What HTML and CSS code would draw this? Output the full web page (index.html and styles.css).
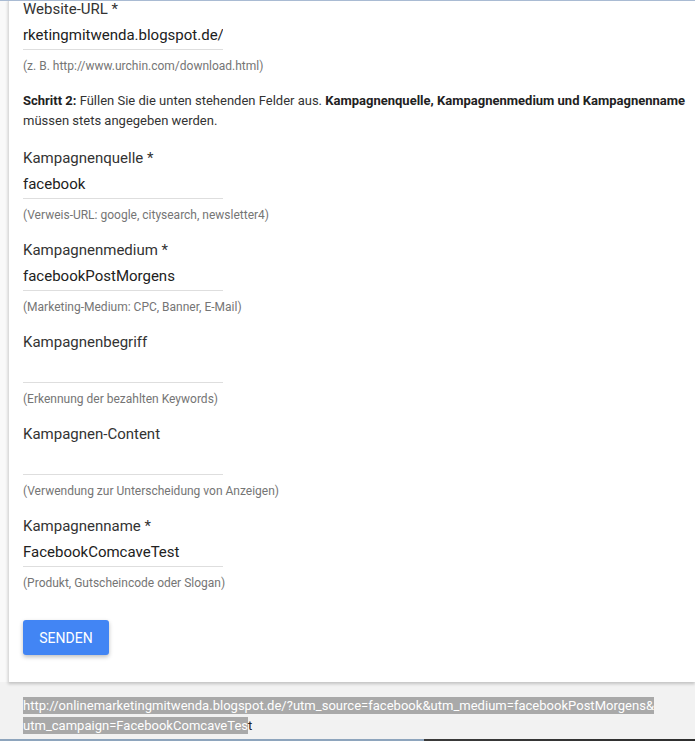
FILE: index.html
```html
<!DOCTYPE html>
<html lang="de">
<head>
  <meta charset="UTF-8">
  <title>Kampagnen-URL-Builder</title>
  <link rel="stylesheet" href="styles.css">
</head>
<body>
  <div class="page">
    <form class="card" onsubmit="return false">
      <div class="field field-first">
        <label>Website-URL *</label>
        <input type="text" value="rketingmitwenda.blogspot.de/">
        <p class="hint">(z. B. http://www.urchin.com/download.html)</p>
      </div>

      <p class="step"><b>Schritt 2:</b> Füllen Sie die unten stehenden Felder aus. <b>Kampagnenquelle, Kampagnenmedium und Kampagnenname</b> müssen stets angegeben werden.</p>

      <div class="field">
        <label>Kampagnenquelle *</label>
        <input type="text" value="facebook">
        <p class="hint">(Verweis-URL: google, citysearch, newsletter4)</p>
      </div>

      <div class="field">
        <label>Kampagnenmedium *</label>
        <input type="text" value="facebookPostMorgens">
        <p class="hint">(Marketing-Medium: CPC, Banner, E-Mail)</p>
      </div>

      <div class="field">
        <label>Kampagnenbegriff</label>
        <input type="text" value="">
        <p class="hint">(Erkennung der bezahlten Keywords)</p>
      </div>

      <div class="field">
        <label>Kampagnen-Content</label>
        <input type="text" value="">
        <p class="hint">(Verwendung zur Unterscheidung von Anzeigen)</p>
      </div>

      <div class="field">
        <label>Kampagnenname *</label>
        <input type="text" value="FacebookComcaveTest">
        <p class="hint">(Produkt, Gutscheincode oder Slogan)</p>
      </div>

      <button type="submit">Senden</button>
    </form>

    <div class="result">
      <div class="result-line"><span class="selected">http://onlinemarketingmitwenda.blogspot.de/?utm_source=facebook&amp;utm_medium=facebookPostMorgens&amp;</span></div>
      <div class="result-line"><span class="selected">utm_campaign=FacebookComcaveTes</span>t</div>
    </div>
  </div>
  <div class="taskbar"></div>
</body>
</html>
```

FILE: styles.css
```css
* {
  box-sizing: border-box;
  margin: 0;
  padding: 0;
}
html, body {
  height: 100%;
}
body {
  font-family: Roboto, 'Liberation Sans', sans-serif;
  color: #333;
  background-color: #f9f9f9;
  border-top: 1px solid #a9bbd3;
  overflow: hidden;
  position: relative;
}
.page {
  height: 738px;
  overflow: hidden;
}
.card {
  margin-left: 8px;
  border-left: 1px solid #dcdcdc;
  background-color: #fff;
  padding: 0 8px 27px 14px;
  box-shadow: 0 2px 3px rgba(0,0,0,0.2);
  position: relative;
}
.field {
  margin-bottom: 17px;
}
.field-first {
  margin-top: -2px;
}
.field label {
  display: block;
  font-size: 15px;
  line-height: 20px;
  color: #333;
  margin-bottom: 2px;
}
.field input {
  display: block;
  width: 200px;
  height: 29px;
  border: none;
  border-bottom: 1px solid #dedede;
  outline: none;
  font-family: inherit;
  font-size: 15px;
  color: #212121;
  background: transparent;
  padding: 0;
}
.hint {
  margin-top: 8px;
  font-size: 12px;
  line-height: 16px;
  color: #757575;
}
.step {
  font-size: 13px;
  line-height: 20px;
  color: #333;
  margin: 1px 0 17px;
}
.step b {
  font-weight: bold;
  color: #222;
}
button {
  display: block;
  margin-top: 29px;
  width: 86px;
  height: 35px;
  background-color: #4285f4;
  color: #fff;
  border: none;
  border-radius: 3px;
  font-family: inherit;
  font-size: 14px;
  text-transform: uppercase;
  box-shadow: 0 2px 4px rgba(0,0,0,0.25);
  cursor: pointer;
}
.result {
  background-color: #f2f2f2;
  padding: 14px 0 0 23px;
  font-size: 13px;
  letter-spacing: 0.02px;
  line-height: 20px;
  color: #222;
  height: 100%;
}
.result-line {
  white-space: nowrap;
}
.selected {
  background-color: #a9a9a9;
  color: #fff;
  padding: 1px 0;
}
.taskbar {
  position: absolute;
  left: 0;
  right: 0;
  bottom: 0;
  height: 2px;
  background: linear-gradient(to right, #8ea5bd 0, #8ea5bd 61%, #3a3a3a 61%, #2e2e2e 100%);
}
```
